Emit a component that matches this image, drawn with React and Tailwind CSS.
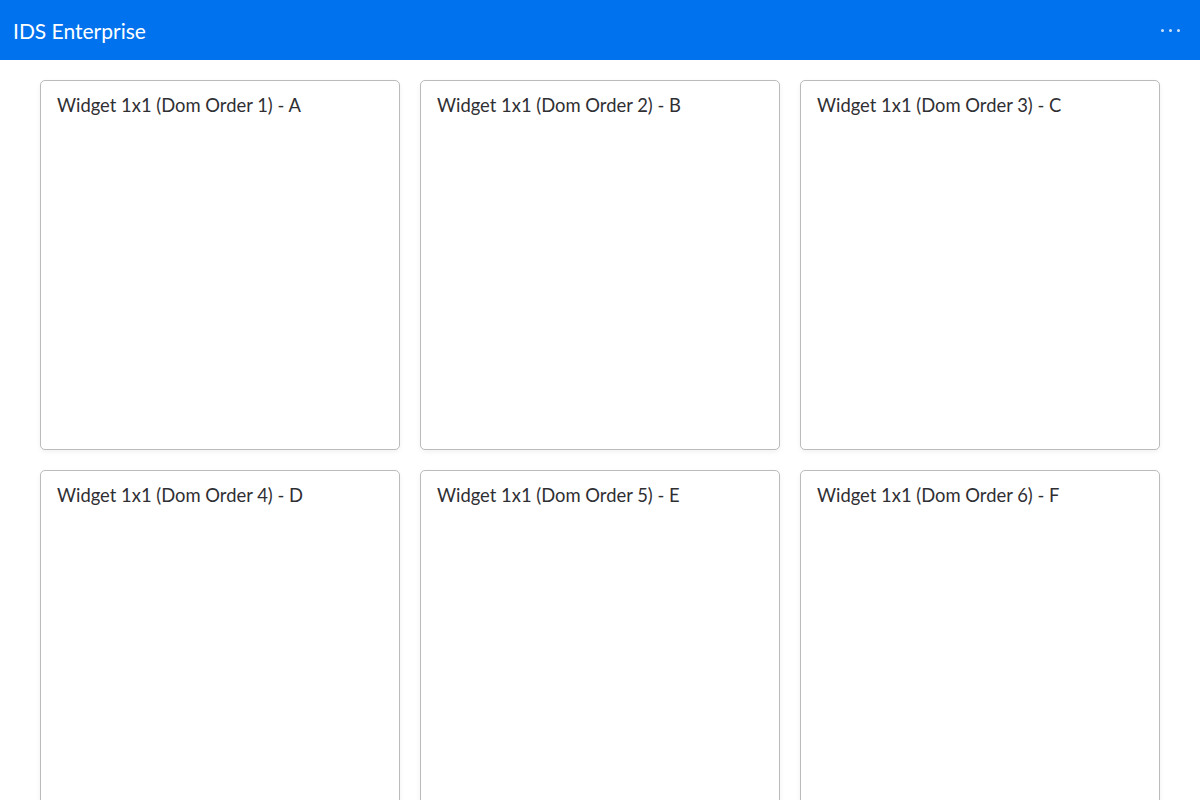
import React from 'react'

const widgets = [
    { order: 1, letter: 'A' },
    { order: 2, letter: 'B' },
    { order: 3, letter: 'C' },
    { order: 4, letter: 'D' },
    { order: 5, letter: 'E' },
    { order: 6, letter: 'F' },
]

function App() {
    return (
        <div className="min-h-screen bg-white font-['Lato','Noto_Sans',sans-serif]">
            {/* Header */}
            <header className="h-[60px] bg-[#0072ed] flex items-center justify-between pl-[13px] pr-[20px]">
                <h1 className="text-white text-[21px] leading-none">IDS Enterprise</h1>
                <button className="flex items-center gap-[5px] h-6">
                    <span className="w-[3px] h-[3px] rounded-full bg-[#cfe3fb]"></span>
                    <span className="w-[3px] h-[3px] rounded-full bg-[#cfe3fb]"></span>
                    <span className="w-[3px] h-[3px] rounded-full bg-[#cfe3fb]"></span>
                </button>
            </header>

            {/* Widgets */}
            <div className="grid grid-cols-3 gap-5 px-10 pt-5 pb-5">
                {widgets.map((w) => (
                    <div
                        key={w.order}
                        className="h-[370px] bg-white border border-[#bbbbbb] rounded-[5px] shadow-[0_2px_5px_rgba(0,0,0,0.06)] px-4 pt-[12px]"
                    >
                        <h2 className="text-[18.4px] text-[#2f2f33] leading-[24px]">
                            Widget 1x1 (Dom Order {w.order}) - {w.letter}
                        </h2>
                    </div>
                ))}
            </div>
        </div>
    )
}

export default App
